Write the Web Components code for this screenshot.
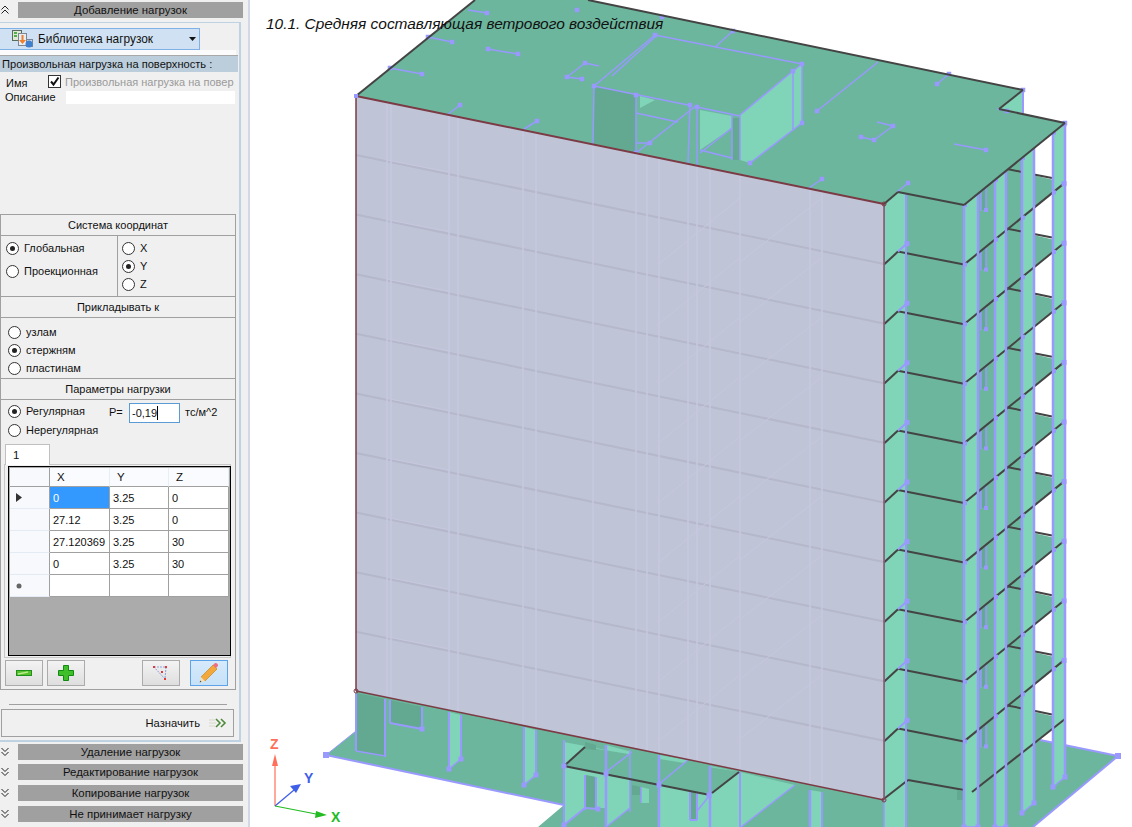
<!DOCTYPE html>
<html lang="ru">
<head>
<meta charset="utf-8">
<title>Добавление нагрузок</title>
<style>
  html, body { margin: 0; height: 100%; overflow: hidden; background: #fff; }
  body { display: flex; font-family: "Liberation Sans", sans-serif; font-size: 11px; color: #111; }
</style>
</head>
<body>
<load-panel></load-panel>
<model-view></model-view>

<script>
"use strict";

(() => {
  const chevrons = {
    up: `<path d="M1.5 6.5 5 3l3.5 3.5M1.5 10.5 5 7l3.5 3.5"/>`,
    down: `<path d="M1.5 3 5 6.5 8.5 3M1.5 7 5 10.5 8.5 7"/>`
  };

  customElements.define("panel-header", class extends HTMLElement {
    constructor() {
      super();
      const dir = this.getAttribute("dir-icon") || "down";
      this.attachShadow({mode: "open"}).innerHTML = `
        <style>
          :host { display: flex; height: 16px; align-items: center; }
          #chev { width: 18px; flex: none; display: flex; padding-left: 0; }
          svg { fill: none; stroke: #222; stroke-width: 1; }
          #bar {
            width: 225px;
            height: 16px;
            line-height: 17px;
            background: #a0a0a0;
            text-align: center;
            font-size: 11.4px;
            color: #111;
          }
        </style>
        <div id="chev"><svg width="10" height="14" viewBox="0 0 10 14">${chevrons[dir]}</svg></div>
        <div id="bar"><slot></slot></div>
      `;
    }
  });

  customElements.define("radio-option", class extends HTMLElement {
    constructor() {
      super();
      const on = this.hasAttribute("checked");
      this.attachShadow({mode: "open"}).innerHTML = `
        <style>
          :host { display: flex; height: 13px; align-items: center; gap: 5px; line-height: 13px; white-space: nowrap; }
          #dot {
            box-sizing: border-box;
            width: 13px;
            height: 13px;
            flex: none;
            border: 1px solid #333;
            border-radius: 50%;
            background: #fff;
            display: flex;
            align-items: center;
            justify-content: center;
          }
          #dot i { width: 5px; height: 5px; border-radius: 50%; background: #222; display: ${on ? "block" : "none"}; }
        </style>
        <span id="dot"><i></i></span><span><slot></slot></span>
      `;
    }
  });

  customElements.define("group-section", class extends HTMLElement {
    constructor() {
      super();
      this.attachShadow({mode: "open"}).innerHTML = `
        <style>
          :host { display: block; border-top: 1px solid #a0a0a0; }
          #title { height: 20px; line-height: 20px; text-align: center; border-bottom: 1px solid #a0a0a0; }
        </style>
        <div id="title">${this.getAttribute("heading")}</div>
        <slot></slot>
      `;
    }
  });

  customElements.define("tool-button", class extends HTMLElement {
    constructor() {
      super();
      this.attachShadow({mode: "open"}).innerHTML = `
        <style>
          :host {
            box-sizing: border-box;
            display: flex;
            width: 38px;
            height: 26px;
            align-items: center;
            justify-content: center;
            border: 1px solid #ababab;
            background: linear-gradient(#f3f3f3, #dedede);
          }
          :host([active]) { border-color: #5da3e8; background: linear-gradient(#d6eafb, #c6e1f8); }
        </style>
        <slot></slot>
      `;
    }
  });

  customElements.define("coord-grid", class extends HTMLElement {
    constructor() {
      super();
      const rows = [
        ["0", "3.25", "0"],
        ["27.12", "3.25", "0"],
        ["27.120369", "3.25", "30"],
        ["0", "3.25", "30"],
        ["", "", ""]
      ];
      const cells = rows.map((r, i) => {
        const mark = i === 0
          ? `<svg width="6" height="9" viewBox="0 0 6 9"><path d="M0 0l6 4.500-6 4.500z" fill="#333"/></svg>`
          : i === 4 ? `<svg width="6" height="6" viewBox="0 0 6 6"><circle cx="3" cy="3" r="2.500" fill="#666"/></svg>` : "";
        return `<div class="rh">${mark}</div>` + r.map((v, j) =>
          `<div class="c${i === 0 && j === 0 ? " sel" : ""}">${v}</div>`).join("");
      }).join("");
      this.attachShadow({mode: "open"}).innerHTML = `
        <style>
          :host {
            box-sizing: border-box;
            display: block;
            height: 190px;
            margin: 1px 0 0 3px;
            width: 223px;
            border: 1px solid #000;
            background: #ababab;
            padding: 1px 1px 0;
          }
          #g {
            display: grid;
            grid-template-columns: 40px 60px 59px 60px;
            grid-template-rows: 19px repeat(5, 22px);
          }
          #g > div { box-sizing: border-box; line-height: 23px; white-space: nowrap; overflow: hidden; }
          .h { background: #f9fbfe; border-right: 1px solid #e8eef6; border-bottom: 1px solid #a0a0a0; padding-left: 7px; font-size: 11.5px; line-height: 19px !important; }
          .rh { background: #f7f9fc; border-right: 1px solid #a0a0a0; border-bottom: 1px solid #e4ebf4; display: flex; align-items: center; padding-left: 6px; }
          .c { background: #fff; border-right: 1px solid #a0a0a0; border-bottom: 1px solid #a0a0a0; padding-left: 3px; }
          .sel { background: #3399ff; color: #fff; }
        </style>
        <div id="g">
          <div class="rh" style="border-bottom-color:#a0a0a0"></div>
          <div class="h">X</div><div class="h">Y</div><div class="h">Z</div>
          ${cells}
        </div>
      `;
    }
  });

  customElements.define("load-panel", class extends HTMLElement {
    constructor() {
      super();
      this.attachShadow({mode: "open"}).innerHTML = `
        <style>
          :host {
            box-sizing: border-box;
            flex: none;
            display: flex;
            flex-direction: column;
            width: 250px;
            height: 827px;
            padding-top: 2px;
            background: #f0f0f0;
            border-right: 2px solid #d3d8e6;
          }
          #box {
            box-sizing: border-box;
            width: 241px;
            height: 720px;
            margin-top: 4px;
            padding-top: 5px;
            border: solid #bfd2e3;
            border-width: 1px 2px 2px 0;
          }
          #library {
            box-sizing: border-box;
            display: flex;
            align-items: center;
            width: 200px;
            height: 22px;
            background: #cfe1f2;
            border: 1px solid #7fb0e6;
            border-left: 0;
            font-size: 11.9px;
          }
          #library svg.ic { margin: 0 4px 0 11px; }
          #library .arrow { margin-left: auto; margin-right: 3px; }
          #strip { height: 5px; width: 236px; background: #fbfbfb; }
          #subject {
            height: 16px;
            line-height: 16px;
            border-top: 1px solid #a8a8a8;
            background: #bccddc;
            padding-left: 2px;
            width: 236px;
            font-size: 11.1px;
          }
          #form {
            height: 142px;
            display: grid;
            grid-template-columns: 66px 169px;
            grid-template-rows: 15px 14px;
            padding-top: 3px;
            box-sizing: border-box;
          }
          #form .lab { padding-left: 6px; line-height: 17px; }
          #form .lab.second { padding-left: 5px; line-height: 15px; }
          #namecell { display: flex; margin-left: -18px; gap: 4px; width: 187px; color: #9a9a9a; line-height: 14px; white-space: nowrap; font-size: 11px; }
          #check { box-sizing: border-box; flex: none; width: 13px; height: 13px; border: 1px solid #333; background: #fff; display: flex; }
          #desc { background: #fff; height: 13px; margin-top: 1px; }
          #groups { width: 236px; box-sizing: border-box; border: solid #a0a0a0; border-width: 0 1px 1px; }
          #coords { display: grid; grid-template-columns: 117px 1fr; height: 60px; }
          #coords > div { box-sizing: border-box; display: flex; flex-direction: column; padding: 6px 0 0 5px; }
          #c-left { gap: 10px; border-right: 1px solid #a0a0a0; }
          #c-right { gap: 5px; padding-left: 4px !important; }
          #apply { height: 60px; box-sizing: border-box; display: flex; flex-direction: column; gap: 5px; padding: 8px 0 0 7px; }
          #params { height: 289px; box-sizing: border-box; padding: 3px 0 0 7px; }
          #p-row { display: flex; align-items: flex-start; height: 20px; }
          #p-row radio-option { margin-top: 2px; width: 101px; }
          #p-row span { line-height: 18px; }
          #p-label { width: 20px; }
          #input {
            box-sizing: border-box;
            width: 51px;
            height: 20px;
            margin: 0 5px 0 0;
            border: 1px solid #5b9bd5;
            background: #fff;
            line-height: 18px;
            padding-left: 2px;
          }
          #input i { display: inline-block; width: 1px; height: 14px; background: #000; vertical-align: -3px; }
          #irregular { margin-top: 1px; }
          #tab {
            box-sizing: border-box;
            width: 45px;
            height: 21px;
            margin: 7px 0 0 -3px;
            background: #fff;
            border: 1px solid #c0c0c0;
            border-bottom: 0;
            padding-left: 7px;
            line-height: 20px;
            font-size: 11.5px;
            position: relative;
            z-index: 1;
          }
          #tabbody {
            box-sizing: border-box;
            width: 227px;
            height: 194px;
            margin: -1px 0 0 -4px;
            border: 1px solid #c8c8c8;
          }
          #tools { display: flex; margin: 2px 0 0 -3px; }
          #sep { height: 1px; width: 218px; margin: 14px 0 0 9px; background: #a0a0a0; }
          #assign {
            box-sizing: border-box;
            width: 233px;
            height: 28px;
            margin: 4px 0 0 1px;
            border: 1px solid #a0a0a0;
            display: flex;
            align-items: center;
            justify-content: flex-end;
            padding-right: 6px;
            gap: 9px;
            font-size: 11.2px;
          }
          #collapsed { display: flex; flex-direction: column; gap: 4px; margin-top: 2px; }
        </style>

        <panel-header dir-icon="up">Добавление нагрузок</panel-header>
        <div id="box">
          <div id="library">
            <svg class="ic" width="23" height="20" viewBox="0 0 23 20">
              <rect x="1.500" y="1.500" width="9" height="10" fill="#dfe8d4" stroke="#5b6b5b"/>
              <path d="M3 4h3M3 7h3" stroke="#1f9a1f" stroke-width="1.500"/>
              <rect x="7.500" y="4.500" width="8" height="12" fill="#e9edf2" stroke="#7b8794"/>
              <path d="M10.500 6v5H8l3.500 4 3.500-4h-2.500V6z" fill="#ef7f2d"/>
              <rect x="15.500" y="10.500" width="6" height="7" fill="#cfd9e6" stroke="#7b8794"/>
              <circle cx="18" cy="15" r="3.500" fill="#3f7fd0"/>
            </svg>
            <span>Библиотека нагрузок</span>
            <svg class="arrow" width="7" height="4" viewBox="0 0 7 4"><path d="M0 0h7L3.500 4z" fill="#111"/></svg>
          </div>
          <div id="strip"></div>
          <div id="subject">Произвольная нагрузка на поверхность :</div>
          <div id="form">
            <div class="lab">Имя</div>
            <div id="namecell">
              <span id="check"><svg width="11" height="11" viewBox="0 0 11 11"><path d="M2 5.500 4.500 8.500 9.500 1.500" fill="none" stroke="#111" stroke-width="2"/></svg></span>
              <span>Произвольная нагрузка на повер</span>
            </div>
            <div class="lab second">Описание</div>
            <div id="desc"></div>
          </div>
          <div id="groups">
            <group-section heading="Система координат">
              <div id="coords">
                <div id="c-left">
                  <radio-option checked>Глобальная</radio-option>
                  <radio-option>Проекционная</radio-option>
                </div>
                <div id="c-right">
                  <radio-option>X</radio-option>
                  <radio-option checked>Y</radio-option>
                  <radio-option>Z</radio-option>
                </div>
              </div>
            </group-section>
            <group-section heading="Прикладывать к">
              <div id="apply">
                <radio-option>узлам</radio-option>
                <radio-option checked>стержням</radio-option>
                <radio-option>пластинам</radio-option>
              </div>
            </group-section>
            <group-section heading="Параметры нагрузки">
              <div id="params">
                <div id="p-row">
                  <radio-option checked>Регулярная</radio-option>
                  <span id="p-label">P=</span>
                  <div id="input">-0,19<i></i></div>
                  <span>тс/м^2</span>
                </div>
                <radio-option id="irregular">Нерегулярная</radio-option>
                <div id="tab">1</div>
                <div id="tabbody"><coord-grid></coord-grid></div>
                <div id="tools">
                  <tool-button>
                    <svg width="16" height="6" viewBox="0 0 16 6"><rect x=".5" y=".5" width="15" height="5" fill="#58c22a" stroke="#1f8f1f"/><path d="M2 4 12 2" stroke="#b8ec8e" stroke-width="1.500"/></svg>
                  </tool-button>
                  <tool-button style="margin-left:4px">
                    <svg width="16" height="16" viewBox="0 0 16 16"><path d="M5.500.5h5v5h5v5h-5v5h-5v-5h-5v-5h5z" fill="#3fc02a" stroke="#128a12"/></svg>
                  </tool-button>
                  <tool-button style="margin-left:57px">
                    <svg width="16" height="16" viewBox="0 0 16 16">
                      <path d="M1 2h12l-1 12z" fill="none" stroke="#8aa0d8" stroke-dasharray="2 1"/>
                      <g fill="#e03a3a"><rect x="0" y="1" width="2" height="2"/><rect x="12" y="1" width="2" height="2"/><rect x="11" y="13" width="2" height="2"/><rect x="8" y="6" width="2" height="2"/></g>
                    </svg>
                  </tool-button>
                  <tool-button active style="margin-left:10px">
                    <svg width="22" height="22" viewBox="0 0 22 22">
                      <path d="M3 15 15 3l4 4L7 19z" fill="#f3a83b" stroke="#c98324" stroke-width=".7"/>
                      <path d="M15 3l1.500-1.500c1-.8 2-.6 2.800.2s1.100 1.900.2 2.900L18 6z" fill="#ee6f82"/>
                      <path d="M3 15l4 4-5 1.500z" fill="#f4dfb8"/>
                      <path d="M2.200 18.500l1.300 1.300-1.800.6z" fill="#444"/>
                    </svg>
                  </tool-button>
                </div>
              </div>
            </group-section>
          </div>
          <div id="sep"></div>
          <div id="assign">
            <span>Назначить</span>
            <svg width="18" height="10" viewBox="0 0 18 10">
              <path d="M0 2h6M0 5h7M0 8h6" stroke="#d8d8c8" stroke-width="1.200"/>
              <path d="M7 1l4 4-4 4M12 1l4 4-4 4" fill="none" stroke="#4f8a3c" stroke-width="1.600"/>
            </svg>
          </div>
        </div>
        <div id="collapsed">
          <panel-header>Удаление нагрузок</panel-header>
          <panel-header>Редактирование нагрузок</panel-header>
          <panel-header style="margin-top:1px">Копирование нагрузок</panel-header>
          <panel-header style="margin-top:1px">Не принимает нагрузку</panel-header>
        </div>
      `;
    }
  });

  // building scene, coordinates are screenshot pixels
  const DARK = "#6cb69d", MINT = "#80d4b8", SHADE = "#63a890", NODE = "#9999ff", BEAM = "#444444";
  const STEP = 59.6;

  const poly = (pts, fill) => `<polygon points="${pts}" fill="${fill}"/>`;
  const seg = (x1, y1, x2, y2, color = NODE, w = 2) =>
    `<line x1="${x1}" y1="${y1}" x2="${x2}" y2="${y2}" stroke="${color}" stroke-width="${w}"/>`;
  const node = (x, y, s = 5) => `<rect x="${x - s / 2}" y="${y - s / 2}" width="${s}" height="${s}" fill="${NODE}"/>`;
  const diag = x => 0.812 * (x - 964);

  function buildPlate() {
    return poly("326,755 356,731 356,691 884,800 1040,740 1118,756 1033,827 538,827 564,805", DARK)
      + seg(326, 755, 564, 805, NODE, 2) + seg(326, 755, 356, 731, NODE, 1)
      + seg(1040, 740, 1118, 756) + seg(1118, 756, 1033, 827)
      + node(326, 755, 6) + node(1118, 756, 6);
  }

  function buildRightBlock() {
    let out = poly("884,204 1035,140 1035,790 884,827", DARK);

    // slabs, from the bottom up
    for (let n = 10; n >= 1; n--) {
      const y = 192 + STEP * n;
      out += poly(`898,${y} 964,${y + 13} 1065,${y - 69} 1000,${y - 84}`, DARK);
    }

    // short stubs hanging under each slab
    for (let n = 0; n < 10; n++) {
      const y = 192 + STEP * n;
      out += poly(`981,${y} 986,${y - 4} 986,${y + 18} 981,${y + 18}`, SHADE)
        + seg(981, y, 981, y + 19, NODE, 1.500) + seg(986, y - 4, 986, y + 19, NODE, 1.500) + node(986, y + 18, 4);
    }

    // wall strips
    const strips = [[964, 978, 827, 827], [995, 1006, 827, 827], [1022, 1034, 813, 803], [1053, 1065, 787, 777]];
    for (const [a, b, ya, yb] of strips) {
      out += poly(`${a},${205 - diag(a)} ${b},${205 - diag(b)} ${b},${yb} ${a},${ya}`, MINT);
    }

    // ground floor front
    out += poly("884,204 906,186 906,827 884,827", MINT);

    // beams, the back edge only shows in the gaps between the walls
    const back = (y, x) => y - 84 + (x - 1000) * 0.2;
    for (let n = 1; n <= 10; n++) {
      const y = 192 + STEP * n;
      out += seg(1006, back(y, 1006), 1022, back(y, 1022), BEAM, 2) + seg(1034, back(y, 1034), 1052, back(y, 1052), BEAM, 2);
      if (n < 10) {
        out += seg(964, y + 13, 1065, y - 69, BEAM, 2);
        out += seg(884, y + 13, 898, y, BEAM, 2) + seg(898, y, 964, y + 13, BEAM, 2);
        out += seg(898, y, 907, y - 8, NODE, 2) + node(907, y - 8);
      } else {
        out += seg(972, 792, 1065, 719, BEAM, 2);
      }
    }
    out += seg(885, 798, 908, 780, BEAM, 2) + seg(908, 780, 964, 790, BEAM, 2);
    out += poly("957,790 964,791 964,800 957,800", SHADE);

    // wall edges go over the beams
    for (const [a, b, ya, yb] of strips) {
      out += seg(a, 205 - diag(a), a, ya, NODE, 2.500) + seg(b, 205 - diag(b), b, yb, NODE, 2.500);
      out += seg(a, ya, b, yb, NODE, 1.500);
      out += node(a, ya) + node(b, yb);
    }
    out += seg(906, 184, 906, 827, NODE, 2) + seg(884, 204, 884, 827, NODE, 1.500);

    for (let n = 0; n <= 9; n++) {
      const y = 205 + STEP * n;
      for (const x of [964, 995, 1022, 1053]) out += node(x + 1, y - diag(x), 4);
      out += node(1064, y - 81, 5);
    }
    return out;
  }

  function buildLower() {
    let out = "";
    // dark wall and opening under the panel
    out += poly("356,693 385,699 385,757 356,751", SHADE)
      + seg(356, 693, 356, 751) + seg(385, 699, 385, 757) + seg(356, 751, 385, 756, NODE, 1.500);
    out += poly("390,700 422,707 422,729 390,722", SHADE)
      + seg(390, 700, 390, 723) + seg(422, 707, 422, 729) + seg(390, 723, 422, 729) + node(422, 729);

    // free standing walls
    out += poly("449,712 461,715 461,759 449,769", MINT) + seg(449, 712, 449, 769) + seg(461, 715, 461, 759) + seg(449, 769, 461, 759, NODE, 1.500) + node(449, 769) + node(461, 759);
    out += poly("524,727 536,730 536,775 524,785", MINT) + seg(524, 727, 524, 785) + seg(536, 730, 536, 775) + seg(524, 785, 536, 775, NODE, 1.500) + node(524, 785) + node(536, 775);

    // core under the panel, first mint walls then slab
    out += poly("564,742 606,750 606,808 585,808 564,825", MINT);
    out += poly("606,745 632,752 606,772", MINT);
    out += poly("659,755 688,760 659,784", MINT);
    out += poly("606,775 630,772 630,808 606,827", MINT);
    out += poly("641,787 649,789 649,803 641,803", MINT);
    out += poly("659,785 710,795 710,827 659,827", MINT);
    out += poly("710,766 740,772 740,827 710,827", MINT);
    out += poly("740,772 795,785 741,827", MINT);
    out += poly("810,790 822,792 822,827 810,827", MINT);
    out += poly("586,775 596,777 596,808 586,808", SHADE);
    out += poly("690,790 697,792 697,820 690,820", SHADE);
    out += poly("632,785 641,787 641,795 632,795", SHADE);
    out += poly("564,766 585,747 740,772 710,795", DARK);
    out += poly("585,742 596,745 596,750 585,749", SHADE);

    out += seg(564, 740, 564, 827) + seg(606, 745, 606, 827, NODE, 2.500) + seg(659, 755, 659, 827, NODE, 2.500)
      + seg(710, 766, 710, 827, NODE, 2.500) + seg(740, 772, 740, 827, NODE, 2) + seg(810, 790, 810, 827, NODE, 2.500) + seg(822, 792, 822, 827, NODE, 2);
    out += seg(585, 775, 585, 810) + seg(596, 777, 596, 808) + seg(585, 808, 564, 825) + seg(586, 808, 598, 809);
    out += seg(630, 750, 630, 812, NODE, 1.500) + seg(641, 787, 641, 803, NODE, 1.500) + seg(606, 827, 630, 808, NODE, 1.500);
    out += seg(690, 790, 690, 820) + seg(697, 792, 697, 820) + seg(690, 820, 697, 820) + seg(697, 811, 710, 795, NODE, 1.500);
    out += seg(741, 827, 795, 785, NODE, 1.500) + seg(606, 772, 632, 752, NODE, 1.500) + seg(659, 784, 688, 760, NODE, 1.500);

    out += seg(564, 766, 710, 795, BEAM, 2.200) + seg(564, 766, 585, 747, BEAM, 2) + seg(712, 793, 739, 772, BEAM, 2);
    out += node(564, 766) + node(606, 774) + node(659, 785) + node(709, 795) + node(564, 825) + node(598, 809);
    return out;
  }

  function buildRoof() {
    let out = poly("356,96 475,0 588,0 1023,90 999,109 1065,123 964,205 898,192 884,204", DARK);
    out += poly("999,109 1023,90 1023,113", MINT) + seg(1023, 90, 1023, 113);

    // penthouse core
    out += poly("594,86 636,95 636,153 593,145", SHADE);
    out += poly("640,96 655,100 640,108", MINT);
    out += poly("700,110 732,116 732,158 700,150", MINT);
    out += poly("700,150 732,128 732,158", DARK);
    out += poly("740,115 793,71 802,64 802,123 793,130 750,163 740,160", MINT);
    out += poly("732,118 740,118 740,160 732,160", SHADE);

    const bits = [
      [594, 86, 593, 145], [594, 86, 655, 35], [612, 76, 655, 37], [655, 35, 802, 64], [594, 86, 688, 105], [636, 95, 636, 153],
      [636, 113, 678, 122], [636, 143, 650, 143], [636, 153, 697, 105], [690, 105, 688, 163], [697, 107, 697, 165],
      [697, 107, 740, 116], [732, 115, 732, 160], [740, 115, 740, 160], [700, 153, 732, 128], [700, 150, 732, 158],
      [740, 115, 793, 71], [793, 71, 793, 130], [802, 64, 802, 123], [793, 71, 802, 64], [750, 163, 802, 123],
      [390, 68, 422, 74], [428, 37, 452, 42], [488, 49, 518, 54], [468, 10, 487, 13],
      [585, 63, 599, 66], [585, 63, 567, 77], [567, 77, 582, 79], [447, 115, 460, 105], [524, 129, 537, 121],
      [715, 47, 733, 31], [817, 111, 878, 62], [937, 84, 949, 74], [877, 122, 893, 126], [893, 126, 874, 140],
      [874, 140, 861, 137], [954, 144, 986, 150], [809, 188, 822, 179], [897, 192, 908, 183], [997, 109, 1007, 111]
    ];
    for (const [a, b, c, d] of bits) out += seg(a, b, c, d, NODE, 1.500);
    const dots = [
      [594, 86], [636, 95], [690, 105], [697, 107], [655, 35], [802, 64], [793, 71], [802, 123], [750, 163],
      [390, 68], [422, 74], [428, 37], [452, 42], [488, 49], [518, 54], [585, 63], [567, 77], [582, 79], [460, 105], [537, 121],
      [733, 31], [817, 111], [937, 84], [949, 74], [893, 126], [874, 140], [861, 137], [986, 150], [822, 179], [908, 183],
      [662, 17], [577, 10], [487, 13], [650, 143], [636, 153], [1065, 123], [1023, 90], [1007, 111]
    ];
    for (const [x, y] of dots) out += node(x, y, 4.500);

    // roof outline
    out += seg(356, 96, 475, 0, BEAM, 2) + seg(588, 0, 1023, 90, BEAM, 2) + seg(1023, 90, 999, 109, BEAM, 2)
      + seg(999, 109, 1065, 123, BEAM, 2) + seg(1065, 123, 964, 205, BEAM, 2) + seg(964, 205, 898, 192, BEAM, 2) + seg(898, 192, 884, 204, BEAM, 2);
    return out;
  }

  function buildPanel() {
    let out = poly("356,96 884,204 884,800 356,691", "#bfc4d6");
    const top = x => 96 + 0.2045 * (x - 356), bottom = x => 691 + 0.2064 * (x - 356);
    const ghost = "#c7c8e0";

    for (let k = 0; k < 9; k++) {
      const y = 155 + STEP * k;
      out += seg(356, y, 884, y + 109, "#b5b7cb", 2);
    }
    for (const x of [387, 391, 449, 458, 523, 536, 593, 636, 647, 659, 688, 697, 710, 740, 810, 822]) {
      out += seg(x, top(x) + 1, x, bottom(x), ghost, 1.500);
    }
    for (let k = 0; k < 9; k++) {
      const y = STEP * k;
      out += seg(387, 160 + y, 449, 172 + y, ghost, 1) + seg(659, 264 + y, 740, 198 + y, ghost, 1) + seg(740, 262 + y, 822, 198 + y, ghost, 1);
    }

    const edge = "#7b3a44";
    out += seg(356, 96, 884, 204, edge, 2) + seg(356, 96, 356, 691, edge, 1.500)
      + seg(884, 204, 884, 800, edge, 1.200) + seg(356, 691, 884, 800, edge, 1.500);
    out += node(356, 96, 4) + `<circle cx="884" cy="800" r="2" fill="none" stroke="${edge}"/><circle cx="884" cy="204" r="2" fill="none" stroke="${edge}"/><circle cx="356" cy="691" r="2" fill="none" stroke="${edge}"/>`;
    return out;
  }

  function buildAxes() {
    const label = (t, x, y, c) => `<text x="${x}" y="${y}" fill="${c}" font-family="Liberation Sans, sans-serif" font-size="14" font-weight="bold">${t}</text>`;
    return seg(275, 806, 275, 766, "#ff6f5a", 1.200) + `<polygon points="275,754 278,766 272,766" fill="#ff6f5a"/>`
      + seg(275, 806, 294, 790, "#3f5fe8", 1.200) + `<polygon points="301,784 296,793 290,786" fill="#3f5fe8"/>`
      + seg(275, 806, 316, 814, "#22bb22", 1.200) + `<polygon points="327,815 315,818 316,811" fill="#22bb22"/>`
      + label("Z", 270, 749, "#ff6f5a") + label("Y", 304, 783, "#3f5fe8") + label("X", 331, 822, "#22bb22");
  }

  customElements.define("model-view", class extends HTMLElement {
    constructor() {
      super();
      this.attachShadow({mode: "open"}).innerHTML = `
        <style>
          :host { display: block; position: relative; flex: 1; height: 827px; background: #fff; overflow: hidden; }
          svg { display: block; }
          #caption {
            position: absolute;
            left: 16px;
            top: 15px;
            font: italic 15.45px "Liberation Sans", sans-serif;
            color: #111;
            white-space: nowrap;
          }
        </style>
        <svg width="882" height="827" viewBox="250 0 882 827">
          ${buildPlate()}${buildRightBlock()}${buildLower()}${buildRoof()}${buildPanel()}${buildAxes()}
        </svg>
        <div id="caption">10.1. Средняя составляющая ветрового воздействия</div>
      `;
    }
  });
})();
</script>
</body>
</html>
